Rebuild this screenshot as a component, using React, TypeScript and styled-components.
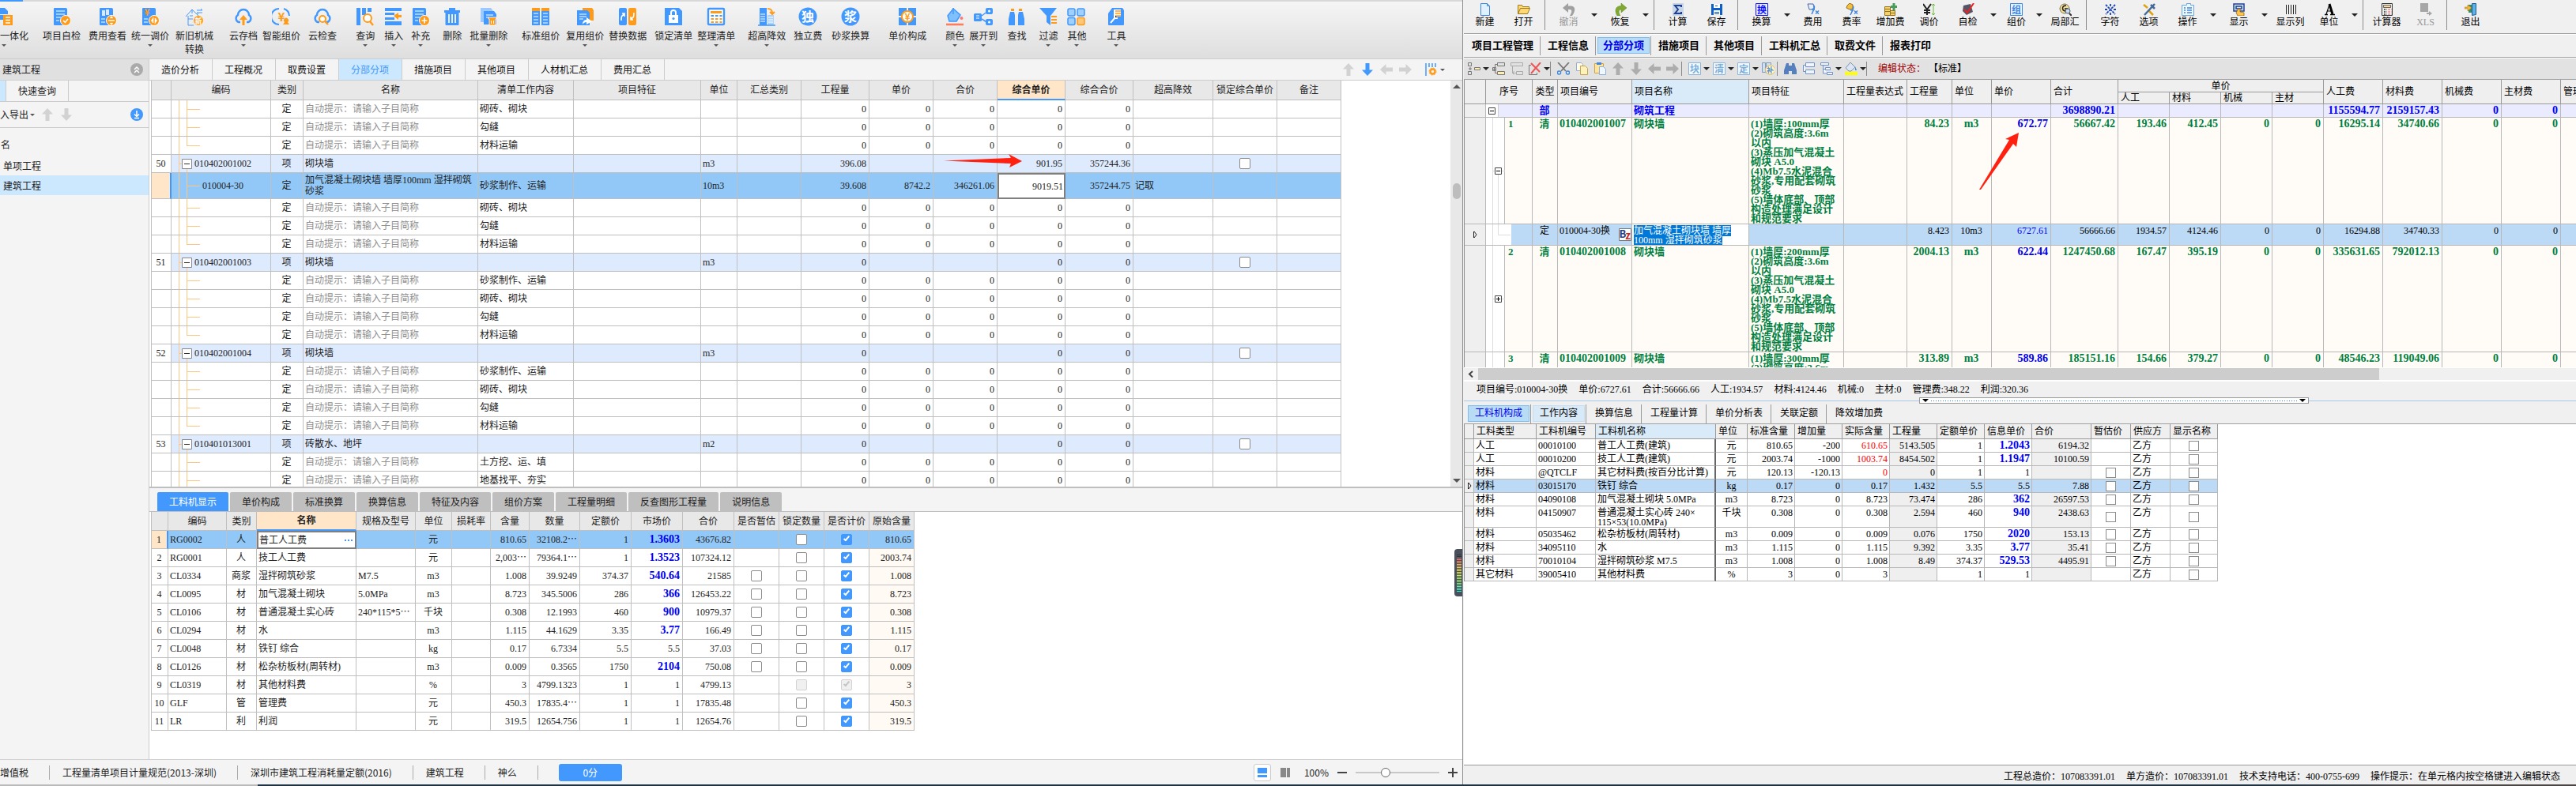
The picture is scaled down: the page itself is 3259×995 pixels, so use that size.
import React from "react";
import styled, { createGlobalStyle, css } from "styled-components";

const SONG = `"Liberation Serif", "Noto Sans CJK SC", sans-serif`;
const HEI = `"Noto Sans CJK SC", "Noto Sans", sans-serif`;
const B = "#4298fd";
const O = "#ff9b1a";

const Global = createGlobalStyle`
  *, *::before, *::after { box-sizing: border-box; }
  body { margin: 0; font: 12px/14px ${SONG}; color: #222; background: #f4f4f4; }
  button, input { font: inherit; color: inherit; margin: 0; padding: 0; border: 0; background: none; }
  button { white-space: nowrap; }
  svg { display: block; flex: none; }
  table { border-collapse: separate; border-spacing: 0; table-layout: fixed; font-size: 12px; line-height: 14px; color: inherit; }
  td, th { padding: 0; }
  th { font-weight: normal; }
`;

/* ---------- shell ---------- */
const Screen = styled.div`
  height: 100vh;
  display: flex;
  flex-direction: column;
  overflow: hidden;
`;
const Windows = styled.div`
  flex: 1;
  min-height: 0;
  display: grid;
  grid-template-columns: minmax(0, 1850fr) minmax(0, 1409fr);
`;
const Taskbar = styled.div`
  flex: none;
  height: 2px;
  background: linear-gradient(90deg, #bbb 0 10%, #1e3444 10% 88%, #4a4444 94%);
`;
const Caret = styled.i<{ $size?: number; $color?: string; $up?: boolean }>`
  flex: none;
  width: 0;
  height: 0;
  border: ${p => p.$size ?? 3}px solid transparent;
  border-top-color: ${p => (p.$up ? "transparent" : p.$color ?? "#555")};
  border-bottom-color: ${p => (p.$up ? p.$color ?? "#555" : "transparent")};
  border-${p => (p.$up ? "top" : "bottom")}-width: 0;
`;

/* ---------- left window ---------- */
const LeftWindow = styled.section`
  display: flex;
  flex-direction: column;
  min-height: 0;
  overflow: hidden;
  font-family: ${HEI};
  background: #f4f4f4;
`;
const TopEdge = styled.div`
  height: 2px;
  flex: none;
  background: linear-gradient(90deg, ${B} 29px, #d8d8d8 29px);
`;
const Ribbon = styled.div`
  flex: none;
  height: 73px;
  display: flex;
  align-items: flex-start;
  padding-top: 7px;
  background: linear-gradient(#f5f5f5, #dedede);
  border-bottom: 1px solid #cdcdcd;
`;
const RibbonButton = styled.button<{ $gap: number; $cut?: boolean }>`
  flex: none;
  margin-left: ${p => p.$gap}px;
  display: flex;
  flex-direction: column;
  align-items: ${p => (p.$cut ? "flex-start" : "center")};
  line-height: 17px;
  > svg { margin-bottom: 3px; }
  > i { margin: 3px ${p => (p.$cut ? 2 : 0)}px; }
`;
const LeftBody = styled.div`
  flex: 1;
  min-height: 0;
  display: flex;
`;
const Sidebar = styled.aside`
  flex: none;
  width: 189px;
  display: flex;
  flex-direction: column;
  border-right: 1px solid #ccc;
`;
const SideTitle = styled.div`
  height: 27px;
  display: flex;
  align-items: center;
  justify-content: space-between;
  padding: 0 7px 0 3px;
  background: #e0e0e0;
  border-bottom: 1px solid #d0d0d0;
`;
const SideTabs = styled.div`
  height: 27px;
  display: flex;
  border-bottom: 1px solid #ccc;
  &::before { content: ""; width: 8px; background: #cce8ff; border-right: 1px solid #ccc; }
`;
const SideTab = styled.button`
  padding: 0 15px;
  border-right: 1px solid #ccc;
`;
const SideTools = styled.div`
  height: 33px;
  display: flex;
  align-items: center;
  gap: 2px;
  padding-right: 7px;
  border-bottom: 1px solid #ccc;
  > svg { margin-left: 6px; }
  > svg:last-child { margin-left: auto; }
`;
const SideList = styled.div`
  padding-top: 6px;
  display: flex;
  flex-direction: column;
`;
const SideItem = styled.button<{ $on?: boolean; $head?: boolean }>`
  height: ${p => (p.$head ? 29 : 25)}px;
  padding-left: ${p => (p.$head ? 1 : 4)}px;
  text-align: left;
  background: ${p => (p.$on ? "#cce8ff" : "none")};
`;
const Main = styled.main`
  flex: 1;
  min-width: 0;
  display: flex;
  flex-direction: column;
`;
const MainTabs = styled.nav`
  flex: none;
  height: 27px;
  display: flex;
  align-items: stretch;
  border-bottom: 1px solid #ccc;
`;
const MainTab = styled.button<{ $on?: boolean }>`
  padding: 0 16px 0 15px;
  border-right: 1px solid #ccc;
  color: ${p => (p.$on ? B : "#111")};
  background: ${p => (p.$on ? "#cce8ff" : "none")};
`;
const MoveTools = styled.div`
  margin-left: auto;
  display: flex;
  align-items: center;
  gap: 8px;
  padding-right: 22px;
  > svg:last-of-type { margin-left: 8px; }
  > i { margin-left: -4px; }
`;
const GridArea = styled.div<{ $grow: number }>`
  flex: ${p => p.$grow} 1 0;
  min-height: 0;
  display: flex;
  overflow: hidden;
  background: #fff;
  font-family: ${SONG};
`;
const GridClip = styled.div`
  flex: 1;
  min-width: 0;
  overflow: hidden;
  padding-left: 2px;
`;
const VScroll = styled.div`
  width: 15px;
  display: flex;
  flex-direction: column;
  align-items: center;
  justify-content: space-between;
  padding: 5px 0;
  background: #e8e8e8;
`;
const VThumb = styled.span`
  width: 10px;
  height: 20px;
  margin: 120px 0 auto;
  border-radius: 5px;
  background: #bdbdbd;
`;
const CostTable = styled.table<{ $head: number }>`
  border-left: 1px solid #bfbfbf;
  td, th {
    border-right: 1px solid #c0c0c0;
    border-bottom: 1px solid #bfbfbf;
    overflow: hidden;
    white-space: nowrap;
  }
  thead tr { height: ${p => p.$head}px; }
  th { background: #e8e8e8; text-align: center; }
`;
const ActiveTh = styled.th`
  && { background: #ffe6c8; font-weight: bold; border-bottom: 2px solid ${B}; }
`;
type Align = "left" | "center" | "right";
const Cell = styled.td<{ $a?: Align; $c?: string; $b?: boolean; $bg?: string }>`
  position: relative;
  text-align: ${p => p.$a ?? "left"};
  && { padding: 0 3px 0 2px; }
  color: ${p => p.$c ?? "inherit"};
  background: ${p => p.$bg ?? "transparent"};
  ${p => p.$b && css`font-weight: bold; font-size: 14px;`}
`;
const RowNo = styled(Cell)<{ $on?: boolean }>`
  background: ${p => (p.$on ? "#ffe6c8" : "#fff")};
  ${p => p.$on && css`&& { border-right: 2px solid ${B}; }`}
`;
const ItemRow = styled.tr<{ $kind: "group" | "child" | "picked" }>`
  height: ${p => (p.$kind === "picked" ? 33 : 23)}px;
  background: ${p => ({ group: "#deeafe", child: "#fff", picked: "#92c8f7" }[p.$kind])};
`;
const Wrapped = styled.div`
  white-space: normal;
`;
const Hint = styled.span`
  color: #8f8f8f;
`;
const TreeCell = styled(Cell)<{ $indent: number }>`
  && { padding-left: ${p => p.$indent}px; }
  > svg { position: absolute; left: 0; top: 0; height: calc(100% + 1px); }
`;
const OpenCell = styled.td`
  && { overflow: visible; position: relative; padding: 0 3px; text-align: right; }
`;
const EditCell = styled.td`
  && { padding: 0; border: 0; background: #fff; }
`;
const EditBox = styled.div<{ $h: number }>`
  height: ${p => p.$h}px;
  display: flex;
  align-items: center;
  border: 2px solid #7f7f7f;
  padding: 0 1px;
  input { width: 100%; min-width: 0; outline: none; }
`;
const RightInput = styled.input`
  text-align: right;
`;
const Tick = styled.input.attrs({ type: "checkbox" })`
  appearance: none;
  display: block;
  width: 14px;
  height: 14px;
  margin: 0 auto;
  border: 1px solid #8c8c8c;
  border-radius: 2px;
  background: #fff;
  &:checked { background: ${B}; border-color: ${B}; }
  &:checked::before {
    content: "";
    display: block;
    width: 4px;
    height: 8px;
    margin: 0 0 0 4px;
    border: solid #fff;
    border-width: 0 2px 2px 0;
    rotate: 40deg;
  }
  &:disabled { background: #f0f0f0; border-color: #d2d2d2; }
  &:disabled::before { border-color: #c4c4c4; }
`;
const DetailTabs = styled.nav`
  flex: none;
  display: flex;
  align-items: flex-end;
  gap: 2px;
  height: 32px;
  padding-left: 10px;
  border-top: 2px solid #bfbfbf;
  border-bottom: 1px solid #bfbfbf;
`;
const DetailTab = styled.button<{ $on?: boolean }>`
  height: 24px;
  padding: 0 15px;
  border-radius: 2px 2px 0 0;
  background: ${p => (p.$on ? B : "#bfbfbf")};
  color: ${p => (p.$on ? "#fff" : "#222")};
`;
const StatusBar = styled.footer`
  flex: none;
  height: 32px;
  display: flex;
  align-items: center;
  border-top: 1px solid #d0d0d0;
  white-space: nowrap;
`;
const StatusItem = styled.span<{ $first?: boolean }>`
  padding: 2px 26px 2px ${p => (p.$first ? 0 : 16)}px;
  border-right: 1px solid #aaa;
`;
const Score = styled.button`
  width: 80px;
  height: 22px;
  margin-left: 26px;
  border-radius: 3px;
  background: ${B};
  color: #fff;
`;
const ZoomTools = styled.div`
  margin-left: auto;
  display: flex;
  align-items: center;
  padding-right: 6px;
  gap: 11px;
`;
const ViewButton = styled.button<{ $on?: boolean }>`
  width: 22px;
  height: 22px;
  margin-right: -4px;
  display: grid;
  place-items: center;
  border-radius: 3px;
  border: ${p => (p.$on ? "1px solid #ccc" : "0")};
  background: ${p => (p.$on ? "#fff" : "none")};
`;
const Percent = styled.span`
  margin-left: 6px;
`;
const ZoomRange = styled.input.attrs({ type: "range" })`
  appearance: none;
  width: 106px;
  height: 14px;
  background: linear-gradient(#c8c8c8, #c8c8c8) center / 100% 2px no-repeat;
  &::-webkit-slider-thumb {
    appearance: none;
    width: 12px;
    height: 12px;
    border-radius: 50%;
    border: 1px solid #666;
    background: #fff;
  }
`;
const Meter = styled.div`
  position: absolute;
  right: 0;
  top: 47px;
  width: 10px;
  height: 60px;
  padding: 7px 1px 6px 3px;
  border-radius: 4px 0 0 4px;
  background: #4a4f5c;
  &::before {
    content: "";
    display: block;
    height: 100%;
    background: repeating-linear-gradient(transparent 0 1px, #4a4f5c 1px 2px),
      linear-gradient(#333 8%, #f66 10%, #fa5 25%, #ee4 45%, #9e6 70%, #3ed 100%);
  }
`;
const LowerArea = styled(GridArea)`
  position: relative;
`;

/* ---------- ribbon pictures ---------- */
const Doc = () => <path fill={B} d="M3 1h14a2 2 0 0 1 2 2v19a1 1 0 0 1-1 1H3a1 1 0 0 1-1-1V2a1 1 0 0 1 1-1z" />;
const Badge = ({ children }: { children?: React.ReactNode }) => (
  <>
    <circle cx="17" cy="17" r="6.5" fill={O} stroke="#fff" />
    <g fill="none" stroke="#fff" strokeWidth="1.6">{children}</g>
  </>
);
const Lines = () => <path stroke="#bfe0ff" strokeWidth="1.6" d="M5 5h11M5 9h11M5 13h6M5 17h4" />;
const Cloud = () => (
  <path fill="none" stroke={B} strokeWidth="2.4" d="M8 19H6a5 5 0 0 1-1-9 7 7 0 0 1 14 0 5 5 0 0 1-1 9h-2" />
);
const Glyph = ({ t, s = 10, x = 12, y = 16, c = "#fff" }: { t: string; s?: number; x?: number; y?: number; c?: string }) => (
  <text x={x} y={y} fontSize={s} fontWeight="bold" textAnchor="middle" fill={c} fontFamily="Noto Sans CJK SC, sans-serif">{t}</text>
);
const ribbonArt: Record<string, React.ReactNode> = {
  check: <><Doc /><Lines /><Badge><path d="M14 17l2.4 2.4L20 15" /></Badge></>,
  fee: <><Doc /><path fill="#fff" d="M5 4h4v7H5zM10 3h4v7h-4z" opacity=".8" /><path stroke="#bfe0ff" strokeWidth="1.6" d="M4 15h5M4 19h5" /><Badge><path d="M13 17h8M15.500 14l1.500-1.500 1.500 1.500M15.500 20l1.500 1.500 1.500-1.500" /></Badge></>,
  price: <><Doc /><Glyph t="¥" s={12} x={8} y={11} c={O} /><path stroke="#bfe0ff" strokeWidth="1.6" d="M4 15h5M4 19h5" /><Badge><path d="M13.500 18l2-3v5M20.500 16l-2 3v-5" /></Badge></>,
  machine: <><path fill="none" stroke={B} d="M1 12L9 3l8 8M4 11v12h7M9 3v5M4 15h6M6 11h4" /><path fill="none" stroke={B} d="M15 4h7l-2-2M22 7h-7l2 2" /><circle cx="17" cy="17" r="6" fill={O} /><Glyph t="新" s={9} x={17} y={20.500} /></>,
  cloudUp: <><Cloud /><path fill={O} d="M12 10l5 6h-3.500v7h-3v-7H7z" /></>,
  smart: <><path fill="none" stroke={B} strokeWidth="2" d="M9 2a10 10 0 0 0 0 20M15 2a10 10 0 0 1 7 9" /><Glyph t="¥" s={15} x={12} y={18} c={O} /><path fill={O} d="M14 22l2-3a3 3 0 1 1 4 0l2 3z" /></>,
  cloudFind: <><Cloud /><circle cx="12" cy="15" r="4" fill="#fff" stroke={O} strokeWidth="2" /><path stroke={O} strokeWidth="2.400" d="M15 18l4 4" /></>,
  query: <><path fill={B} d="M1 1h5v22H1zM8 1h5v9H8zM15 1h5v5h-5z" /><circle cx="15" cy="14" r="5" fill="#fff" stroke={O} strokeWidth="2" /><path stroke={O} strokeWidth="2.400" d="M18 18l4 5" /></>,
  insert: <><path fill={B} d="M1 1h21v4H1zM1 7h12v3H1zM1 13h12v3H1zM1 18h21v5H1z" /><path fill={O} d="M12 11l6-4v3h4v3h-4v3z" /></>,
  add: <><Doc /><Lines /><Badge><path d="M17 13.500v7M13.500 17h7" /></Badge></>,
  trash: <path fill={B} fillRule="evenodd" d="M8 1h8v3h6v3h-1.500v15a1 1 0 0 1-1 1h-15a1 1 0 0 1-1-1V7H2V4h6zM7 9v11h2V9zM11 9v11h2V9zM15 9v11h2V9z" />,
  trashMany: <><path fill="#9ccaff" d="M2 1h13l3 4v14H2z" /><path fill={B} d="M6 5h13l3 4v13H6z" /><path stroke="#fff" d="M9 10h9M9 13h4" /><path fill={O} stroke="#fff" strokeWidth=".8" d="M12 13h10v2h-1v8h-8v-8h-1z" /><path stroke="#fff" d="M15.500 17v4M18.500 17v4" /></>,
  standard: <><path fill={B} d="M1 1h10v22H1zM13 1h10v22H13z" /><path fill={O} d="M1 1h10v4H1zM13 1h10v4H13z" /><path stroke="#fff" d="M3 8h6M3 12h6M3 16h6M3 20h6M15 8h6M15 12h6M15 16h6M15 20h6" /></>,
  reuse: <><path fill={O} d="M9 1h12l2 3v13H9z" /><path fill={B} d="M2 4h13l3 3v16H2z" /><path stroke="#fff" d="M5 9h9M5 12h9M5 15h5" /><path fill="#fff" d="M9 22c0-5 3-6 5-6v-3l7 5-7 4v-3c-2 0-4 1-5 3z" /></>,
  swap: <><rect x="1" y="1" width="10" height="22" rx="2" fill={B} /><rect x="13" y="1" width="10" height="22" rx="2" fill={O} /><path fill="none" stroke="#fff" strokeWidth="1.600" d="M4 17c0-5 0-6 4-8M5 8l3 0 0 4M20 7c0 5 0 6-4 8M19 16l-3 0 0-4" /></>,
  lock: <><path fill={B} d="M1 1h18l4 4v18H1z" /><path fill="#fff" d="M6 10h12v10H6z" /><path fill="none" stroke="#fff" strokeWidth="2" d="M9 10V7a3 3 0 0 1 6 0v3" /><circle cx="12" cy="14.500" r="1.600" fill={B} /></>,
  sheet: <><rect x="2" y="2" width="20" height="20" rx="1" fill="#fff" stroke={B} strokeWidth="2.400" /><path fill={O} d="M5 5h14v3H5z" /><path stroke={B} strokeWidth="2" strokeDasharray="3.500 2" d="M5.500 11h14" /><path stroke={O} strokeWidth="2" strokeDasharray="3.500 2" d="M5.500 15h14M5.500 19h14" /></>,
  tall: <><path fill={B} d="M3 1h9v22H3z" /><path fill="#a8d4ff" d="M13 10h8v13h-8z" /><path stroke="#fff" d="M4 9h6M4 12h6M4 15h6M4 18h6M14 13h6M14 16h6M14 19h6" /><path stroke={B} strokeWidth="1.500" d="M1 23h22" /><path fill="none" stroke={O} strokeWidth="2" d="M13 2c4 0 6 1 6 6M16 6l3 3 3-3" /></>,
  solo: <><circle cx="12" cy="12" r="11.500" fill={B} /><Glyph t="独" s={16} y={18} /></>,
  mortar: <><circle cx="12" cy="12" r="11.500" fill={B} /><Glyph t="浆" s={16} y={18} /></>,
  unit: <><path fill={B} d="M1 1h10v4L5 11H1zM13 1h10v10h-4l-6-6zM1 13h4l6 6v4H1zM19 13h4v10H13v-4z" /><circle cx="12" cy="12" r="7" fill="#fff" stroke={O} strokeWidth="2" /><Glyph t="¥" s={12} y={16.500} c={O} /></>,
  color: <><path fill="#7fc0ff" stroke={B} strokeWidth="1.500" d="M10 2l9 8-5 8H5L3 11z" /><path fill="none" stroke={B} strokeWidth="1.500" d="M10 9V1" /><circle cx="20.500" cy="14" r="2" fill="#f77" /><path stroke="#ff7d5c" strokeWidth="2.600" d="M1 22h22" /></>,
  expand: <><rect x="0" y="8" width="10" height="10" rx="1.500" fill={B} /><path stroke="#fff" d="M3 11h4M3 14h4" /><path stroke={B} strokeWidth="1.500" d="M10 11l8-6M10 15l8 5" /><rect x="15" y="1" width="9" height="8" rx="2" fill={B} /><rect x="15" y="15" width="9" height="8" rx="2" fill={B} /><circle cx="19.500" cy="5" r="1.500" fill="#fff" /><circle cx="19.500" cy="19" r="1.500" fill="#fff" /></>,
  find: <><path fill={B} d="M4 6h5l1 4v13H2V15zM15 6h5l2 9v8h-8V10z" /><path fill={O} d="M5 2h4v3H5zM15 2h4v3h-4z" /></>,
  filter: <><path fill={B} d="M1 1h22l-8 10v12l-5-4v-8z" /><path stroke={O} strokeWidth="2" d="M16 12h7M16 16h7M16 20h7" /></>,
  other: <g strokeWidth="1.500"><rect x="1" y="2" width="9" height="9" rx="2" fill="#9fd0ff" stroke={B} /><rect x="13" y="2" width="9" height="9" rx="2" fill="#9fd0ff" stroke={B} /><rect x="1" y="13.500" width="9" height="9" rx="2" fill="#9fd0ff" stroke={B} /><rect x="13" y="13.500" width="9" height="9" rx="2" fill="#ffc77a" stroke={O} /></g>,
  tools: <><path fill={B} d="M7 1h13l2 3v18a1 1 0 0 1-1 1H3a1 1 0 0 1-1-1V8z" /><path fill="#fff" d="M9 3h9v9H9z" /><path stroke={O} strokeWidth="1.500" d="M11 5h7M11 8h7M11 11h7" /><path stroke="#fff" strokeWidth="2" d="M5 20l6-7M10 10v4h4" /></>,
};
const RibbonArt = ({ name }: { name: string }) =>
  name === "merge" ? (
    <svg width="16" height="24" viewBox="0 0 16 24"><path fill={B} d="M0 1h6l4 4v4H0z" /><path fill={B} d="M0 10h5v6H0z" /><path fill={O} d="M4 10h12v13H4z" /><path stroke="#fff" strokeWidth="1.500" d="M7 13h6M7 16.500h6M7 20h6" /></svg>
  ) : (
    <svg width="24" height="24" viewBox="0 0 24 24">{ribbonArt[name]}</svg>
  );

type RB = [string, string, number, boolean?];
const ribbon: RB[] = [
  ["merge", "一体化", 0, true], ["check", "项目自检", 18], ["fee", "费用查看", 10], ["price", "统一调价", 6, true],
  ["machine", "新旧机械\n转换", 8], ["cloudUp", "云存档", 20, true], ["smart", "智能组价", 6], ["cloudFind", "云检查", 10],
  ["query", "查询", 24, true], ["insert", "插入", 12, true], ["add", "补充", 10, true], ["trash", "删除", 16],
  ["trashMany", "批量删除", 10, true], ["standard", "标准组价", 18], ["reuse", "复用组价", 8, true], ["swap", "替换数据", 6],
  ["lock", "锁定清单", 10], ["sheet", "整理清单", 6, true], ["tall", "超高降效", 16, true], ["solo", "独立费", 10],
  ["mortar", "砂浆换算", 12], ["unit", "单价构成", 24], ["color", "颜色", 24, true], ["expand", "展开到", 6, true],
  ["find", "查找", 12], ["filter", "过滤", 16, true], ["other", "其他", 12, true], ["tools", "工具", 26, true],
];
const Label = styled.span`
  white-space: pre;
`;

const BigArrow = ({ dir, color = "#d2d2d2" }: { dir: "up" | "down" | "left" | "right"; color?: string }) => (
  <svg width="16" height="16" viewBox="0 0 16 16">
    <path fill={color} transform={`rotate(${{ up: 0, right: 90, down: 180, left: 270 }[dir]} 8 8)`} d="M8 0l7 7.500h-4.500V16h-5V7.500H1z" />
  </svg>
);

/* ---------- left data ---------- */
interface Item { no?: string; code?: string; kind: "group" | "child" | "picked"; name?: string; work?: string; unit?: string; q?: string; p?: string; t?: string; cp?: string; ct?: string; last?: boolean }
const kid = (work: string, last = false): Item => ({ kind: "child", work, last, q: "0", p: "0", t: "0", cp: "0", ct: "0" });
const grp = (no: string, code: string, name: string, unit: string, q = "0", cp = "0", ct = "0"): Item => ({ kind: "group", no, code, name, unit, q, cp, ct });
const items: Item[] = [
  kid("砌砖、砌块"), kid("勾缝"), kid("材料运输", true),
  grp("50", "010402001002", "砌块墙", "m3", "396.08", "901.95", "357244.36"),
  { kind: "picked", code: "010004-30", name: "加气混凝土砌块墙 墙厚100mm 湿拌砌筑砂浆", work: "砂浆制作、运输", unit: "10m3", q: "39.608", p: "8742.2", t: "346261.06", cp: "9019.51", ct: "357244.75" },
  kid("砌砖、砌块"), kid("勾缝"), kid("材料运输", true),
  grp("51", "010402001003", "砌块墙", "m3"),
  kid("砂浆制作、运输"), kid("砌砖、砌块"), kid("勾缝"), kid("材料运输", true),
  grp("52", "010402001004", "砌块墙", "m3"),
  kid("砂浆制作、运输"), kid("砌砖、砌块"), kid("勾缝"), kid("材料运输", true),
  grp("53", "010401013001", "砖散水、地坪", "m2"),
  kid("土方挖、运、填"), kid("地基找平、夯实"),
];
const itemCols = [25, 126, 41, 221, 121, 161, 46, 81, 86, 81, 81, 86, 86, 101, 81, 81];
const itemHeads = ["", "编码", "类别", "名称", "清单工作内容", "项目特征", "单位", "汇总类别", "工程量", "单价", "合价", "综合单价", "综合合价", "超高降效", "锁定综合单价", "备注"];
const sum = (a: number[]) => a.reduce((x, y) => x + y, 0);
const Cols = ({ w }: { w: number[] }) => <colgroup>{w.map((x, i) => <col key={i} style={{ width: x }} />)}</colgroup>;

const Guides = ({ item }: { item: Item }) => (
  <svg width="38" stroke="#ffc680" strokeWidth="1">
    <path d="M9.500 0V40" />
    {item.kind === "group" ? (
      <>
        <path d="M9.500 11.500H13M19.500 18V40" />
        <path fill="#fff" stroke="#888" d="M13.500 5.500h12v12h-12z" />
        <path stroke="#333" d="M16 11.500h7" />
      </>
    ) : (
      <>
        <line x1="19.500" x2="19.500" y1="0" y2={item.last ? "50%" : "100%"} />
        <line x1="19" x2="36" y1="50%" y2="50%" />
      </>
    )}
  </svg>
);
const PointerMark = styled.svg<{ $x: number; $y: number }>`
  position: absolute;
  z-index: 3;
  left: ${p => p.$x}px;
  top: ${p => p.$y}px;
`;

const rowData: string[][] = [
  ["1", "RG0002", "人", "普工人工费", "", "元", "810.65", "32108.2⋯", "1", "1.3603", "43676.82", "n", "u", "c", "810.65"],
  ["2", "RG0001", "人", "技工人工费", "", "元", "2,003⋯", "79364.1⋯", "1", "1.3523", "107324.12", "n", "u", "c", "2003.74"],
  ["3", "CL0334", "商浆", "湿拌砌筑砂浆", "M7.5", "m3", "1.008", "39.9249", "374.37", "540.64", "21585", "u", "u", "c", "1.008"],
  ["4", "CL0095", "材", "加气混凝土砌块", "5.0MPa", "m3", "8.723", "345.5006", "286", "366", "126453.22", "u", "u", "c", "8.723"],
  ["5", "CL0106", "材", "普通混凝土实心砖", "240*115*5⋯", "千块", "0.308", "12.1993", "460", "900", "10979.37", "u", "u", "c", "0.308"],
  ["6", "CL0294", "材", "水", "", "m3", "1.115", "44.1629", "3.35", "3.77", "166.49", "u", "u", "c", "1.115"],
  ["7", "CL0048", "材", "铁钉 综合", "", "kg", "0.17", "6.7334", "5.5", "5.5", "37.03", "u", "u", "c", "0.17"],
  ["8", "CL0126", "材", "松杂枋板材(周转材)", "", "m3", "0.009", "0.3565", "1750", "2104", "750.08", "u", "u", "c", "0.009"],
  ["9", "CL0319", "材", "其他材料费", "", "%", "3", "4799.1323", "1", "1", "4799.13", "n", "du", "dc", "3"],
  ["10", "GLF", "管", "管理费", "", "元", "450.3", "17835.4⋯", "1", "1", "17835.48", "n", "u", "c", "450.3"],
  ["11", "LR", "利", "利润", "", "元", "319.5", "12654.756", "1", "1", "12654.76", "n", "u", "c", "319.5"],
];
const resCols = [21, 74, 38, 126, 75, 46, 49, 49, 64, 65, 65, 65, 57, 57, 57, 57];
const resHeads = ["", "编码", "类别", "名称", "规格及型号", "单位", "损耗率", "含量", "数量", "定额价", "市场价", "合价", "是否暂估", "锁定数量", "是否计价", "原始含量"];
const ResRow = styled.tr<{ $on: boolean }>`
  height: 23px;
  background: ${p => (p.$on ? "#92c8f7" : "#fff")};
`;
const flag = (f: string, label: string) =>
  f === "n" ? null : <Tick aria-label={label} defaultChecked={f.includes("c")} disabled={f.startsWith("d")} />;

function LeftApp() {
  return (
    <LeftWindow>
      <TopEdge />
      <Ribbon>
        {ribbon.map(([icon, text, gap, caret], i) => (
          <RibbonButton key={text} $gap={gap} $cut={i === 0}>
            <RibbonArt name={icon} />
            <Label>{text}</Label>
            {caret && <Caret />}
          </RibbonButton>
        ))}
      </Ribbon>
      <LeftBody>
        <Sidebar>
          <SideTitle>
            建筑工程
            <svg width="16" height="16" viewBox="0 0 16 16"><circle cx="8" cy="8" r="8" fill="#aaa" /><path fill="none" stroke="#fff" strokeWidth="1.500" d="M5 8l3-3 3 3M5 12l3-3 3 3" /></svg>
          </SideTitle>
          <SideTabs><SideTab>快速查询</SideTab></SideTabs>
          <SideTools>
            <button>入导出</button><Caret />
            <BigArrow dir="up" /><BigArrow dir="down" />
            <svg width="16" height="16" viewBox="0 0 16 16"><circle cx="8" cy="8" r="8" fill={B} /><path fill="none" stroke="#fff" strokeWidth="1.500" d="M8 3v7M5 7.500l3 3 3-3M5 12.500h6" /></svg>
          </SideTools>
          <SideList>
            <SideItem $head>名</SideItem>
            <SideItem>单项工程</SideItem>
            <SideItem $on>建筑工程</SideItem>
          </SideList>
        </Sidebar>
        <Main>
          <MainTabs>
            {["造价分析", "工程概况", "取费设置", "分部分项", "措施项目", "其他项目", "人材机汇总", "费用汇总"].map(t => (
              <MainTab key={t} $on={t === "分部分项"}>{t}</MainTab>
            ))}
            <MoveTools>
              <BigArrow dir="up" /><BigArrow dir="down" color={B} /><BigArrow dir="left" /><BigArrow dir="right" />
              <svg width="16" height="16" viewBox="0 0 16 16"><path stroke={B} strokeWidth="1.500" d="M2 0v16M6 0v5M10 0v5M14 0v5" /><circle cx="10.500" cy="10.500" r="3" fill="none" stroke={O} strokeWidth="2.400" /><circle cx="10.500" cy="10.500" r="4.500" fill="none" stroke={O} strokeDasharray="2 1.500" /></svg>
              <Caret />
            </MoveTools>
          </MainTabs>
          <GridArea $grow={514}>
            <GridClip>
              <CostTable $head={25} style={{ width: sum(itemCols) }}>
                <Cols w={itemCols} />
                <thead><tr>{itemHeads.map((h, i) => (i === 11 ? <ActiveTh key={i}>{h}</ActiveTh> : <th key={i}>{h}</th>))}</tr></thead>
                <tbody>
                  {items.map((it, i) => (
                    <ItemRow key={i} $kind={it.kind}>
                      <RowNo $a="center" $on={it.kind === "picked"}>{it.no}</RowNo>
                      <TreeCell $indent={it.kind === "group" ? 29 : 39}><Guides item={it} />{it.code}</TreeCell>
                      <Cell $a="center">{it.kind === "group" ? "项" : "定"}</Cell>
                      <Cell>{it.name ? <Wrapped>{it.name}</Wrapped> : <Hint>自动提示：请输入子目简称</Hint>}</Cell>
                      <Cell>{it.work}</Cell>
                      <Cell />
                      <Cell>{it.unit}</Cell>
                      <Cell />
                      <Cell $a="right">{it.q}</Cell>
                      <Cell $a="right">{it.p}</Cell>
                      <Cell $a="right">{it.t}</Cell>
                      {it.kind === "picked" ? (
                        <EditCell><EditBox $h={33}><RightInput aria-label="综合单价" defaultValue={it.cp} /></EditBox></EditCell>
                      ) : (
                        <OpenCell>
                          {it.cp}
                          {it.no === "50" && (
                            <PointerMark $x={-68} $y={-2} width="100" height="20"><path fill="#ff2010" d="M0 9.500L85 6 82 1 99 10 83 18 85 13z" /></PointerMark>
                          )}
                        </OpenCell>
                      )}
                      <Cell $a="right">{it.ct}</Cell>
                      <Cell>{it.kind === "picked" && "记取"}</Cell>
                      <Cell>{it.kind === "group" && <Tick aria-label="锁定综合单价" />}</Cell>
                      <Cell />
                    </ItemRow>
                  ))}
                </tbody>
              </CostTable>
            </GridClip>
            <VScroll><Caret $up $size={5} /><VThumb /><Caret $size={5} /></VScroll>
          </GridArea>
          <DetailTabs>
            {["工料机显示", "单价构成", "标准换算", "换算信息", "特征及内容", "组价方案", "工程量明细", "反查图形工程量", "说明信息"].map((t, i) => (
              <DetailTab key={t} $on={i === 0}>{t}</DetailTab>
            ))}
          </DetailTabs>
          <LowerArea $grow={313}>
            <GridClip>
              <CostTable $head={24} style={{ width: sum(resCols) }}>
                <Cols w={resCols} />
                <thead><tr>{resHeads.map((h, i) => (i === 3 ? <ActiveTh key={i}>{h}</ActiveTh> : <th key={i}>{h}</th>))}</tr></thead>
                <tbody>
                  {rowData.map((r, i) => {
                    const hot = r[9].length > 1 && r[9] !== "5.5";
                    return (
                      <ResRow key={r[0]} $on={i === 0}>
                        <RowNo $a="center" $on={i === 0}>{r[0]}</RowNo>
                        <Cell>{r[1]}</Cell>
                        <Cell $a="center">{r[2]}</Cell>
                        {i === 0 ? (
                          <EditCell><EditBox $h={23}><input aria-label="名称" defaultValue={r[3]} /><svg width="12" height="4"><path fill={B} d="M0 1h2v2H0zM4 1h2v2H4zM8 1h2v2H8z" /></svg></EditBox></EditCell>
                        ) : <Cell>{r[3]}</Cell>}
                        <Cell>{r[4]}</Cell>
                        <Cell $a="center">{r[5]}</Cell>
                        <Cell />
                        <Cell $a="right">{r[6]}</Cell>
                        <Cell $a="right">{r[7]}</Cell>
                        <Cell $a="right">{r[8]}</Cell>
                        <Cell $a="right" $b={hot} $c={hot ? "#0000f0" : undefined}>{r[9]}</Cell>
                        <Cell $a="right">{r[10]}</Cell>
                        <Cell>{flag(r[11], "是否暂估")}</Cell>
                        <Cell>{flag(r[12], "锁定数量")}</Cell>
                        <Cell>{flag(r[13], "是否计价")}</Cell>
                        <Cell $a="right" $bg={i ? "#fffaf3" : undefined}>{r[14]}</Cell>
                      </ResRow>
                    );
                  })}
                </tbody>
              </CostTable>
            </GridClip>
            <Meter />
          </LowerArea>
        </Main>
      </LeftBody>
      <StatusBar>
        <StatusItem $first>增值税</StatusItem>
        <StatusItem>工程量清单项目计量规范(2013-深圳)</StatusItem>
        <StatusItem>深圳市建筑工程消耗量定额(2016)</StatusItem>
        <StatusItem>建筑工程</StatusItem>
        <StatusItem>神么</StatusItem>
        <Score>0分</Score>
        <ZoomTools>
          <ViewButton $on aria-label="上下排列"><svg width="12" height="12"><path fill={B} d="M0 0h12v7H0zM0 9h12v3H0z" /></svg></ViewButton>
          <ViewButton aria-label="左右排列"><svg width="12" height="12"><path fill="#888" d="M0 0h7v12H0zM8 0h4v12H8z" /></svg></ViewButton>
          <Percent>100%</Percent>
          <button aria-label="缩小"><svg width="12" height="12"><path stroke="#444" strokeWidth="2" d="M0 6h12" /></svg></button>
          <ZoomRange aria-label="缩放" min={0} max={100} defaultValue={34} />
          <button aria-label="放大"><svg width="12" height="12"><path stroke="#444" strokeWidth="2" d="M0 6h12M6 0v12" /></svg></button>
        </ZoomTools>
      </StatusBar>
    </LeftWindow>
  );
}

/* ---------- right window ---------- */
const RightWindow = styled.section`
  display: flex;
  flex-direction: column;
  min-height: 0;
  overflow: hidden;
  padding-left: 1px;
  border-left: 1px solid #8f8f8f;
  background: #f0f0f0;
  color: #000;
  white-space: nowrap;
`;
const ToolRow = styled.div`
  flex: none;
  height: 43px;
  display: flex;
  align-items: flex-start;
  padding-left: 2px;
  border-bottom: 1px solid #a0a0a0;
`;
const ToolButton = styled.button<{ $narrow?: boolean }>`
  flex: none;
  width: ${p => (p.$narrow ? 42 : 49)}px;
  height: 42px;
  padding-top: 4px;
  display: flex;
  flex-direction: column;
  align-items: center;
  gap: 1px;
  line-height: 14px;
  &:disabled { color: #9a9a9a; }
`;
const DropButton = styled.button<{ $w: number }>`
  flex: none;
  width: ${p => p.$w}px;
  height: 38px;
  display: grid;
  place-items: center;
`;
const ToolSep = styled.span`
  flex: none;
  width: 8px;
  height: 38px;
  &::before { content: ""; display: block; width: 3px; height: 100%; border-right: 1px solid #8c8c8c; }
`;
const PageTabs = styled.nav`
  flex: none;
  height: 30px;
  display: flex;
  align-items: center;
  padding: 0 1px;
  border-top: 1px solid #fff;
  border-bottom: 1px solid #a0a0a0;
`;
const TabSlot = styled.span`
  height: 24px;
  padding: 1px 1px 2px 2px;
  border-right: 1px solid #9a9a9a;
  &:last-child { border: 0; }
`;
const PageTab = styled.button<{ $on?: boolean; $soft?: boolean; $bold?: boolean }>`
  height: 21px;
  padding: 0 ${p => (p.$bold ? 6 : 8)}px;
  border: 1px solid ${p => (p.$on ? "#7fbdf0" : p.$soft ? "#c5def2" : "transparent")};
  background: ${p => (p.$on ? "#b9dcf6" : p.$soft ? "#d8e9f7" : "none")};
  color: ${p => (p.$on ? "#0000f0" : "#000")};
  font-size: ${p => (p.$bold ? 13 : 12)}px;
  font-weight: ${p => (p.$bold ? "bold" : "normal")};
`;
const EditTools = styled.div`
  flex: none;
  height: 28px;
  display: flex;
  align-items: center;
  padding-left: 1px;
  background: #e2e2e2;
  border-top: 1px solid #fff;
  border-bottom: 1px solid #a0a0a0;
`;
const EditTool = styled.button`
  flex: none;
  width: 23px;
  display: grid;
  place-items: center;
`;
const EditDrop = styled(DropButton)`
  height: 20px;
`;
const EditSep = styled.span`
  flex: none;
  width: 5px;
  height: 18px;
  border-left: 1px solid #888;
`;
const EditState = styled.span`
  margin: 0 4px 0 10px;
  color: #a00000;
`;
const BillArea = styled.div<{ $grow: number; $bg: string }>`
  flex: ${p => p.$grow} 1 0;
  min-height: 0;
  overflow: hidden;
  background: ${p => p.$bg};
`;
const BillTable = styled.table`
  border-left: 1px solid #8c8c8c;
  th, td { overflow: hidden; }
  th {
    background: #efefef;
    text-align: left;
    padding-left: 3px;
    border-right: 1px solid #9a9a9a;
    border-bottom: 1px solid #9a9a9a;
    white-space: nowrap;
  }
  td { border-right: 1px solid #b8b8b8; border-bottom: 1px solid #b8b8b8; }
`;
const HeadRow = styled.tr<{ $h: number }>`
  height: ${p => p.$h}px;
`;
const HotTh = styled.th`
  && { background: #d9ebf9; }
`;
const MidTh = styled.th`
  && { text-align: center; padding: 0; }
`;
const BillRow = styled.tr<{ $kind: "root" | "item" | "sub"; $short?: boolean }>`
  height: ${p => (p.$short ? 40 : { root: 17, item: 135, sub: 27 }[p.$kind])}px;
  vertical-align: top;
  line-height: 12px;
  ${p => p.$kind === "item" && css`color: #007f40; font-weight: bold; background: #fffcf7;`}
  ${p => p.$kind === "root" && css`color: #0000f0; font-weight: bold; background: #eaebff;`}
  ${p => p.$kind === "sub" && css`background: #bcdaf6;`}
  font-size: ${p => (p.$kind === "sub" ? 12 : 13)}px;
`;
const BC = styled.td<{ $a?: Align; $num?: boolean; $blue?: boolean }>`
  && { padding: 2px 3px 0 2px; }
  text-align: ${p => p.$a ?? "left"};
  ${p => p.$num && css`font-size: 14px;`}
  ${p => p.$blue && css`color: #0000f0;`}
  ${p => p.$blue && css`&& { overflow: visible; position: relative; }`}
`;
const Gutter = styled.td`
  background: #efefef;
  position: relative;
  vertical-align: middle;
`;
const BranchCell = styled.td`
  position: relative;
  && { padding: 2px 0 0 28px; }
  > svg { position: absolute; left: 0; top: 0; height: 100%; }
`;
const Feature = styled.div`
  white-space: pre;
`;
const NameEdit = styled(BC)`
  background: #fff;
`;
const Picked = styled.span`
  background: #0078d7;
  color: #fff;
`;
const CodeWithMark = styled.div`
  display: flex;
  justify-content: space-between;
  margin-right: -3px;
  > svg { margin-top: 3px; }
`;
const HScroll = styled.div`
  flex: none;
  height: 18px;
  display: flex;
  align-items: center;
  border-bottom: 2px solid #fff;
  border-top: 1px solid #fff;
`;
const HThumb = styled.span`
  width: 81%;
  height: 15px;
  background: #cdcdcd;
`;
const InfoLine = styled.div`
  flex: none;
  height: 20px;
  display: flex;
  align-items: center;
  gap: 14px;
  padding-left: 16px;
`;
const Splitter = styled.div`
  flex: none;
  height: 8px;
  display: grid;
  grid-template-columns: 576fr 493fr 338fr;
  background: linear-gradient(#a9c8e8, #a9c8e8) center / 100% 1px no-repeat;
`;
const Grip = styled.button`
  grid-column: 2;
  display: flex;
  align-items: center;
  gap: 3px;
  padding: 0 3px;
  border: 1px solid #999;
  background: #fff;
`;
const Dots = styled.span`
  flex: 1;
  height: 1px;
  background: repeating-linear-gradient(90deg, #2a7fd0 0 1px, transparent 1px 3px);
`;
const SubTabs = styled.nav`
  flex: none;
  height: 26px;
  display: flex;
  align-items: center;
  padding-left: 3px;
  border-bottom: 1px solid #a0a0a0;
`;
const MatRow = styled.tr<{ $h?: number; $on?: boolean }>`
  height: ${p => p.$h ?? 17}px;
  vertical-align: top;
  line-height: 12px;
  background: ${p => (p.$on ? "#bcdaf6" : "#fff")};
  white-space: pre-line;
`;
const MC = styled.td<{ $a?: Align; $gray?: boolean; $red?: boolean; $hot?: boolean; $wall?: boolean }>`
  && { padding: 2px 2px 0; }
  text-align: ${p => p.$a ?? "left"};
  ${p => p.$gray && css`background: #efefef;`}
  ${p => p.$red && css`color: #f00;`}
  ${p => p.$hot && css`color: #0000f0; font-weight: bold; font-size: 14px;`}
  ${p => p.$wall && css`&& { border-right: 2px solid #666; }`}
`;
const BoxCell = styled.td`
  vertical-align: middle;
`;
const Box = styled(Tick)`
  width: 13px;
  height: 13px;
  border-color: #8c8c8c;
  border-radius: 0;
`;
const RightStatus = styled.footer`
  flex: none;
  height: 25px;
  display: flex;
  align-items: center;
  justify-content: flex-end;
  gap: 14px;
  padding: 3px 20px 0 0;
  border-top: 1px solid #999;
`;

const NV = "#23408e";
const SKY = "#3f86dd";
const art: Record<string, React.ReactNode> = {
  new: <path fill="#dff0ff" stroke={SKY} d="M2.500.500h8l3 3v12h-11zM10.500.500v3h3" />,
  open: <path fill="#ffd873" stroke="#9a7a20" d="M.500 13.500v-11h5l1 2h8v2M.500 13.500l3-7h12l-3 7z" />,
  undo: <path fill="#a0a0a0" d="M0 6l7-6v3.500h3c6 0 7 5 2 12.500H9c3-5 3-8 0-8H7v4z" />,
  redo: <path fill="#82a832" stroke="#5d8a1e" strokeWidth=".5" d="M16 6L9 0v3.500C2 3.500 0 9 4 16h4C5 11 6 8 9 8v4z" />,
  calc: <><rect x="1" y="0" width="14" height="16" fill="#c6d6ea" /><path fill="none" stroke={NV} strokeWidth="2" d="M12 5V3H4l4 5-4 5h8v-2" /></>,
  save: <><path fill="#0f5fcb" d="M1 1h14v14H1z" /><path fill="#fff" d="M4 1h8v5H4zM4 9h8v6H4z" /><path stroke="#0f5fcb" d="M5 11.500h6M5 13.500h6M6 3.500h3" /></>,
  swap: <><path fill="#e8f0ff" stroke="#1111ff" d="M.500.500h15v15H.500z" /><Glyph t="换" s={12} x={8} y={12.500} c="#1111ff" /></>,
  cost: <><path fill="#e6f0fb" stroke={NV} strokeWidth=".8" d="M1 1h7l1 5-3 2H3z" /><path fill="none" stroke={SKY} strokeWidth="1.500" d="M8 3c3 0 1 5-2 11M6 8h4M11 9.500l4 4M15 9.500l-4 4" /></>,
  rate: <><path fill="#f0c040" stroke="#805000" strokeWidth=".8" d="M2 3l3-3 4 2v5L5 8 1 6z" /><path fill="none" stroke={SKY} strokeWidth="1.500" d="M9 4c2 0 0 5-3 11M6 9h4M11 9.500l4 4M15 9.500l-4 4" /></>,
  plus: <><path fill="#f3d26b" stroke="#927020" d="M.500 4.500h7v11h-7zM7.500 9.500h6v6h-6zM.500 7.500h7M.500 10.500h7M7.500 12.500h6" /><path stroke="#4a9a5a" strokeWidth="3" d="M12 0v9M8 4.500h8" /></>,
  yen: <><path fill="none" stroke="#222" strokeWidth="2" d="M0 1l5 7 5-7M5 8v7M1 9h8M1 12h8" /><path fill="none" stroke="#6b3" d="M13 1v14M11 3l2-2 2 2M11 13l2 2 2-2" /></>,
  self: <><path fill="#556" d="M2 3l9-2 3 10-8 4-5-5z" /><path fill="none" stroke="#e22" strokeWidth="2" d="M3 8l4 4 8-12" /></>,
  group: <><path fill="#e6f1ff" stroke={SKY} d="M.500.500h15v15H.500z" /><Glyph t="组" s={12} x={8} y={12.500} c={SKY} /></>,
  part: <><circle cx="7" cy="7" r="6" fill="#f0d99a" stroke="#775" /><path fill="none" stroke="#221" strokeWidth="1.500" d="M9 3c-6 0-6 7 0 7M7 7h4" /><circle cx="11" cy="10" r="3" fill="#cde" stroke="#457" /><path stroke="#333" strokeWidth="2" d="M13 13l3 3" /></>,
  sign: <path stroke="#1a44b8" strokeWidth="1.800" strokeDasharray="3 1" d="M2 2l12 12M14 2L2 14M8 1v3M8 12v3M1 8h3M12 8h3" />,
  option: <><path stroke="#e0a010" strokeWidth="2.500" d="M1 2l5 4M7 9l6 6" /><path stroke="#456a9a" strokeWidth="2.500" d="M15 1L2 15M10 2l5 5" /></>,
  action: <><path fill="#eef7ff" stroke="#6aa6dd" d="M.500 2.500h6v-2h5v2h4v13H.500z" /><path stroke={SKY} strokeWidth="1.500" d="M3 6h2M7 6h6M3 9h2M7 9h6M3 12h2M7 12h6" /></>,
  show: <><path fill="#cfe2fa" stroke={NV} strokeWidth="1.500" d="M1 1h13v9H1zM4 4h7v3H4z" /><path fill="#ffc44d" stroke="#850" strokeWidth=".7" d="M7 7h2v4l5 1v4H6l-2-4z" /></>,
  cols: <path stroke="#222" d="M2.500 2v12M5.500 2v12M8.500 2v12M11.500 2v12M14.500 2v12" />,
  unit: <><path stroke="#000" strokeWidth="3" d="M8 1l4 13" /><path stroke="#000" fill="none" strokeWidth="1.200" d="M8 2L4 14M5.500 10h5" /><path stroke="#000" strokeWidth="1.600" d="M2 14.500h4M9 14.500h6" /></>,
  calcu: <><path fill="#eee" stroke="#333" d="M1.500.500h13v15h-13z" /><path fill="#f6d9a0" stroke="#333" strokeWidth=".7" d="M3.500 2.500h9v3h-9z" /><path stroke="#333" strokeWidth="1.500" strokeDasharray="2 1.500" d="M4 8h4M4 11h4M4 14h4" /><path stroke="#e66" strokeWidth="1.500" strokeDasharray="2 1.500" d="M9.500 8h4M9.500 11h4M9.500 14h4" /></>,
  xls: <path fill="#a6a6a6" d="M1 0h10v11H1zM9 12h3v-2l4 3-4 3v-2H9z" />,
  exit: <><path fill="#5fb0e8" stroke="#1c5c94" d="M9.500.500h5v14l-5 1z" /><path fill="#3a8b6a" d="M5 2h4v10H5z" /><path fill="#f3b73a" stroke="#a06a00" strokeWidth=".5" d="M0 5h4V2l5 4-5 4V7H0z" /></>,
  tree1: <><path fill="none" stroke="#777" d="M.500.500h4v4h-4zM.500 11.500h4v4h-4zM1 8h4M3 6v4" /><path fill="#ffeeb0" stroke="#777" d="M8.500 6.500h7v3h-7z" /></>,
  tree2: <><path fill="none" stroke="#777" d="M6.500.500h9v4h-9zM3.500 6V2.500h3M3.500 11v2.500h3M.500 6.500h4v4h-4zM1 8.500h4M2.500 7v4" /><path fill="#ffeeb0" stroke="#777" d="M6.500 11.500h9v4h-9z" /></>,
  tree3: <path fill="none" stroke="#aaa" d="M.500.500h15v4H.500zM7.500 11.500h8v4h-8zM2.500 5v8.500h5M4.500 11l-2 2.500 2 2" />,
  del: <><path fill="none" stroke="#777" d="M3 3.500H.500v12h10V13" /><path fill="none" stroke="#e55" strokeWidth="2" d="M3 1l11 11M15 0L3 14" /></>,
  cut: <><path stroke="#777" strokeWidth="1.800" d="M1 0l10 11M15 0L5 11" /><circle cx="2.500" cy="13" r="2" fill="#fff" stroke={SKY} strokeWidth="1.500" /><circle cx="13.500" cy="13" r="2" fill="#fff" stroke={SKY} strokeWidth="1.500" /></>,
  copy: <><path fill="#fffbe8" stroke="#8fb0d4" d="M1.500.500h6l2 2v8h-8z" /><path fill="#fff2b8" stroke="#c9a24a" d="M6.500 4.500h6l3 3v8h-9z" /></>,
  paste: <><path fill="#ffe49a" stroke="#c9a24a" d="M1.500 1.500h11v12h-11z" /><path fill={SKY} d="M4 0h6v3H4z" /><path fill="#eef6ff" stroke="#8fb0d4" d="M7.500 5.500h5l3 3v7h-8z" /></>,
  bino: <path fill="#5680bd" d="M3 1h3v3h4V1h3l3 9v5h-6v-4H6v4H0v-5z" />,
  lay1: <path fill="#eef5ff" stroke="#7393c8" d="M4.500.500h11v5h-11zM4.500 9.500h11v5h-11zM4 3.500H1.500v8H4" />,
  lay2: <path fill="#eef5ff" stroke="#7393c8" d="M.500.500h10v3H.500zM6.500 6.500h6v3h-6zM8.500 12.500h7v3h-7zM3.500 4v10h5M3.500 8.500h3" />,
  fill: <><path fill="#dce6f2" stroke="#7c93b0" d="M7 0l6 6-5 5H5L1 7z" /><path fill={SKY} d="M13 5l2 5h-2z" /><path fill="#ff0" d="M0 12h16v4H0z" /></>,
  patch: <><path fill="#cfe0f2" stroke="#7f9cc0" d="M.500.500h4v12h-4zM5.500.500h6v13h-6z" /><circle cx="10.500" cy="9.500" r="6" fill="#fff6cc" stroke="#e0c060" /><Glyph t="补" s={9} x={10.500} y={13} c="#5a8cc8" /></>,
};
const Art = ({ name }: { name: string }) => {
  if (name.startsWith("@")) {
    return <svg width="16" height="16" viewBox="0 0 16 16"><path fill="#f2f8ff" stroke="#8eb4dc" d="M.500.500h15v15H.500z" /><Glyph t={name[1]} s={12} x={8} y={12.500} c="#7aaedb" /></svg>;
  }
  if (name.startsWith(">")) return <BigArrow dir={name.slice(1) as "up"} color="#adadad" />;
  return <svg width="16" height="16" viewBox="0 0 16 16">{art[name]}</svg>;
};
/* "|" is a divider, "v" a drop-down arrow for the button before it */
const mainTools: (string | [string, string])[] = [
  ["new", "新建"], ["open", "打开"], "|", ["undo", "撤消"], "v", ["redo", "恢复"], "v", "|", ["calc", "计算"], ["save", "保存"], "|",
  ["swap", "换算"], "v", ["cost", "费用"], ["rate", "费率"], ["plus", "增加费"], ["yen", "调价"], ["self", "自检"], "v", ["group", "组价"], "v",
  ["part", "局部汇"], "|", ["sign", "字符"], ["option", "选项"], ["action", "操作"], "v", ["show", "显示"], "v", ["cols", "显示列"],
  ["unit", "单位"], "v", "|", ["calcu", "计算器"], ["xls", "XLS"], "|", ["exit", "退出"],
];
const editTools = ["tree1", "v", "tree2", "tree3", "del", "v", "|", "cut", "copy", "paste", ">up", ">down", ">left", ">right", "|", "@块", "v", "@清", "v", "@定", "v", "patch", "|", "bino", "lay1", "lay2", "v", "fill", "v", "|"];

const feature = (t: string, short?: boolean) =>
  `(1)墙厚:${t}mm厚\n(2)砌筑高度:3.6m` +
  (short ? "" : `\n以内\n(3)蒸压加气混凝土\n砌块 A5.0\n(4)Mb7.5水泥混合\n砂浆,专用配套砌筑\n砂浆\n(5)墙体底部、顶部\n构造处理满足设计\n和规范要求`);
const billCols = [27, 59, 32, 94, 148, 120, 80, 57, 50, 75, 85, 65, 65, 65, 65, 75, 75, 75, 75, 75];
const bill: { kind: "root" | "item" | "sub"; no?: string; type: string; code: string; name: string; feat?: string; open?: boolean; short?: boolean; n: string[] }[] = [
  { kind: "root", type: "部", code: "", name: "砌筑工程", n: ["", "", "", "3698890.21", "", "", "", "", "1155594.77", "2159157.43", "0", "0", ""] },
  { kind: "item", no: "1", type: "清", code: "010402001007", name: "砌块墙", feat: "100", open: true, n: ["84.23", "m3", "672.77", "56667.42", "193.46", "412.45", "0", "0", "16295.14", "34740.66", "0", "0", ""] },
  { kind: "sub", type: "定", code: "010004-30换", name: "加气混凝土砌块墙 墙厚100mm 湿拌砌筑砂浆", n: ["8.423", "10m3", "6727.61", "56666.66", "1934.57", "4124.46", "0", "0", "16294.88", "34740.33", "0", "0", ""] },
  { kind: "item", no: "2", type: "清", code: "010402001008", name: "砌块墙", feat: "200", n: ["2004.13", "m3", "622.44", "1247450.68", "167.47", "395.19", "0", "0", "335631.65", "792012.13", "0", "0", ""] },
  { kind: "item", no: "3", type: "清", code: "010402001009", name: "砌块墙", feat: "300", short: true, n: ["313.89", "m3", "589.86", "185151.16", "154.66", "379.27", "0", "0", "48546.23", "119049.06", "0", "0", ""] },
];
const Branch = ({ kind, open, short }: { kind: "root" | "item" | "sub"; open?: boolean; short?: boolean }) => {
  if (kind === "root")
    return <svg width="24"><path fill="#fff" d="M0 0h16v17H0z" /><path fill="#fff" stroke="#444" d="M3.500 4.500h8v8h-8z" /><path stroke="#000" d="M5 8.500h5" /><path stroke="#ccc" d="M15.500 0v17" /></svg>;
  if (kind === "sub")
    return <svg width="32"><path fill="#fff" d="M0 0h32v27H0z" /><path fill="none" stroke="#ddd" d="M8.500 0v27M15.500 0v13.500H31" /></svg>;
  return (
    <svg width="24">
      <path fill="#fff" d="M0 0h24v140H0z" /><path stroke="#ddd" d="M8.500 0v140" /><path stroke="#bbb" d="M23.500 0v140" />
      {!short && (
        <>
          <path stroke="#ddd" d={open ? "M8 67.500h16M15.500 68v70" : "M8 67.500h16"} />
          <path fill="#fff" stroke="#444" d="M11.500 63.500h8v8h-8z" />
          <path stroke="#000" d={open ? "M13 67.500h5" : "M13 67.500h5M15.500 65v5"} />
        </>
      )}
    </svg>
  );
};
const RowPointer = styled.svg`
  margin: 0 auto;
`;
const Pointer = () => <RowPointer width="6" height="10"><path fill="none" stroke="#222" d="M1.500 1v8M2 1l3 4-3 4" /></RowPointer>;

const matCols = [12, 79, 75, 152, 40, 60, 60, 60, 60, 60, 60, 75, 50, 50, 60];
const matHeads = ["", "工料类型", "工料机编号", "工料机名称", "单位", "标准含量", "增加量", "实际含量", "工程量", "定额单价", "信息单价", "合价", "暂估价", "供应方", "显示名称"];
const mats: string[][] = [
  ["人工", "00010100", "普工人工费(建筑)", "元", "810.65", "-200", "610.65", "5143.505", "1", "1.2043", "6194.32", ""],
  ["人工", "00010200", "技工人工费(建筑)", "元", "2003.74", "-1000", "1003.74", "8454.502", "1", "1.1947", "10100.59", ""],
  ["材料", "@QTCLF", "其它材料费(按百分比计算)", "元", "120.13", "-120.13", "0", "0", "1", "1", "", "x"],
  ["材料", "03015170", "铁钉 综合", "kg", "0.17", "0", "0.17", "1.432", "5.5", "5.5", "7.88", "x"],
  ["材料", "04090108", "加气混凝土砌块 5.0MPa", "m3", "8.723", "0", "8.723", "73.474", "286", "362", "26597.53", "x"],
  ["材料", "04150907", "普通混凝土实心砖 240×\n115×53(10.0MPa)", "千块", "0.308", "0", "0.308", "2.594", "460", "940", "2438.63", "x"],
  ["材料", "05035462", "松杂枋板材(周转材)", "m3", "0.009", "0", "0.009", "0.076", "1750", "2020", "153.13", "x"],
  ["材料", "34095110", "水", "m3", "1.115", "0", "1.115", "9.392", "3.35", "3.77", "35.41", "x"],
  ["材料", "70010104", "湿拌砌筑砂浆 M7.5", "m3", "1.008", "0", "1.008", "8.49", "374.37", "529.53", "4495.91", "x"],
  ["其它材料", "39005410", "其他材料费", "%", "3", "0", "3", "", "1", "1", "", ""],
];

function RightApp() {
  return (
    <RightWindow>
      <ToolRow>
        {mainTools.map((t, i) => {
          if (t === "|") return <ToolSep key={i} />;
          if (t === "v") return <DropButton key={i} $w={16} aria-label="更多"><Caret $size={4} $color="#222" /></DropButton>;
          return <ToolButton key={i} $narrow={t[0] === "group"} disabled={t[0] === "undo" || t[0] === "xls"}><Art name={t[0]} />{t[1]}</ToolButton>;
        })}
      </ToolRow>
      <PageTabs>
        {["项目工程管理", "工程信息", "分部分项", "措施项目", "其他项目", "工料机汇总", "取费文件", "报表打印"].map(t => (
          <TabSlot key={t}><PageTab $bold $on={t === "分部分项"}>{t}</PageTab></TabSlot>
        ))}
      </PageTabs>
      <EditTools>
        {editTools.map((t, i) =>
          t === "|" ? <EditSep key={i} /> : t === "v" ? <EditDrop key={i} $w={8} aria-label="更多"><Caret $size={4} $color="#222" /></EditDrop> : <EditTool key={i} aria-label={t}><Art name={t} /></EditTool>
        )}
        <EditState>编辑状态：</EditState>
        <span>【标准】</span>
      </EditTools>
      <BillArea $grow={364} $bg="#fffcf7">
        <BillTable style={{ width: sum(billCols) + 1 }}>
          <Cols w={billCols} />
          <thead>
            <HeadRow $h={16}>
              <th rowSpan={2} /><MidTh rowSpan={2}>序号</MidTh><MidTh rowSpan={2}>类型</MidTh><th rowSpan={2}>项目编号</th><HotTh rowSpan={2}>项目名称</HotTh>
              <th rowSpan={2}>项目特征</th><th rowSpan={2}>工程量表达式</th><th rowSpan={2}>工程量</th><th rowSpan={2}>单位</th><th rowSpan={2}>单价</th><th rowSpan={2}>合计</th>
              <MidTh colSpan={4}>单价</MidTh>
              <th rowSpan={2}>人工费</th><th rowSpan={2}>材料费</th><th rowSpan={2}>机械费</th><th rowSpan={2}>主材费</th><th rowSpan={2}>管理费</th>
            </HeadRow>
            <HeadRow $h={15}><th>人工</th><th>材料</th><th>机械</th><th>主材</th></HeadRow>
          </thead>
          <tbody>
            {bill.map((r, i) => (
              <BillRow key={i} $kind={r.kind} $short={r.short}>
                <Gutter>{r.kind === "sub" && <Pointer />}</Gutter>
                <BranchCell><Branch kind={r.kind} open={r.open} short={r.short} />{r.no}</BranchCell>
                <BC $a="center">{r.type}</BC>
                {r.kind === "sub" ? (
                  <BC><CodeWithMark>{r.code}<svg width="16" height="16" viewBox="0 0 16 16"><path fill="#fff" stroke="#777" d="M.500.500h15v15H.500z" /><Glyph t="B" s={13} x={5} y={12} c={NV} /><Glyph t="z" s={13} x={11.500} y={14} c="#c22" /></svg></CodeWithMark></BC>
                ) : <BC $num>{r.code}</BC>}
                {r.kind === "sub" ? <NameEdit><Wrapped><Picked>{r.name}</Picked></Wrapped></NameEdit> : <BC>{r.name}</BC>}
                <BC>{r.feat && <Feature>{feature(r.feat, r.short)}</Feature>}</BC>
                <BC />
                {r.n.map((v, j) => (
                  <BC key={j} $num={r.kind !== "sub"} $blue={j === 2} $a={j === 1 ? "center" : "right"}>
                    {v}
                    {j === 2 && r.no === "1" && (
                      <PointerMark $x={-16} $y={19} width="52" height="74"><path fill="#ff2010" d="M0 72L38 9 33 8 50 0 47 18 43 14 2 72z" /></PointerMark>
                    )}
                  </BC>
                ))}
              </BillRow>
            ))}
          </tbody>
        </BillTable>
      </BillArea>
      <HScroll>
        <svg width="18" height="15"><path fill="none" stroke="#444" strokeWidth="2" d="M11 4L7 7.500l4 4" /></svg>
        <HThumb />
      </HScroll>
      <InfoLine>
        {["项目编号:010004-30换", "单价:6727.61", "合计:56666.66", "人工:1934.57", "材料:4124.46", "机械:0", "主材:0", "管理费:348.22", "利润:320.36"].map(t => <span key={t}>{t}</span>)}
      </InfoLine>
      <Splitter><Grip aria-label="折叠"><Caret $size={4} $color="#000" /><Dots /><Caret $size={4} $color="#000" /></Grip></Splitter>
      <SubTabs>
        {["工料机构成", "工作内容", "换算信息", "工程量计算", "单价分析表", "关联定额", "降效增加费"].map((t, i) => (
          <TabSlot key={t}><PageTab $on={i === 0} $soft={i === 1}>{t}</PageTab></TabSlot>
        ))}
      </SubTabs>
      <BillArea $grow={431} $bg="#fff">
        <BillTable style={{ width: sum(matCols) + 1 }}>
          <Cols w={matCols} />
          <thead><HeadRow $h={19}>{matHeads.map((h, i) => (i === 3 ? <HotTh key={i}>{h}</HotTh> : <th key={i}>{h}</th>))}</HeadRow></thead>
          <tbody>
            {mats.map((m, i) => {
              const on = i === 3;
              const hot = m[9].length > 1 && m[9] !== "5.5";
              return (
                <MatRow key={i} $on={on} $h={i === 5 ? 27 : 17}>
                  <Gutter>{on && <Pointer />}</Gutter>
                  <MC>{m[0]}</MC><MC>{m[1]}</MC><MC $wall>{m[2]}</MC><MC $a="center">{m[3]}</MC>
                  <MC $a="right">{m[4]}</MC><MC $a="right">{m[5]}</MC><MC $a="right" $red={i < 3}>{m[6]}</MC>
                  <MC $a="right" $gray={!on}>{m[7]}</MC><MC $a="right">{m[8]}</MC><MC $a="right" $hot={hot}>{m[9]}</MC><MC $a="right" $gray={!on}>{m[10]}</MC>
                  <BoxCell>{m[11] && <Box aria-label="暂估价" />}</BoxCell>
                  <MC>乙方</MC>
                  <BoxCell><Box aria-label="显示名称" /></BoxCell>
                </MatRow>
              );
            })}
          </tbody>
        </BillTable>
      </BillArea>
      <RightStatus>
        <span>工程总造价：107083391.01</span><span>单方造价：107083391.01</span><span>技术支持电话：400-0755-699</span><span>操作提示：在单元格内按空格键进入编辑状态</span>
      </RightStatus>
    </RightWindow>
  );
}

export default function App() {
  return (
    <>
      <Global />
      <Screen>
        <Windows><LeftApp /><RightApp /></Windows>
        <Taskbar />
      </Screen>
    </>
  );
}
